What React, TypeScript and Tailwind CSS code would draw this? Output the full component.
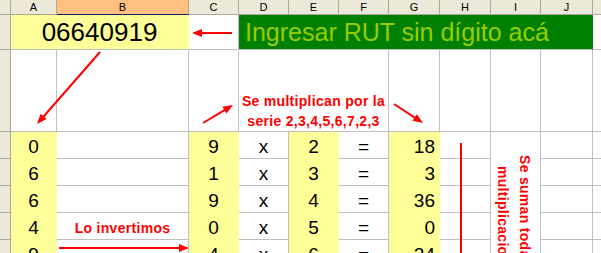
import type { FC, ReactNode } from 'react';

const gridCell = 'border-r border-b border-[#c0c0c0] bg-white';
const yellowCell = 'border-r border-b border-[#ffff99] bg-[#ffff99]';
const headCell = 'border-r border-b border-[#aca899] bg-[#ece9d8]';
const numText = 'flex items-end text-[19px] leading-none pb-[2px] text-black';

const rows = [
  ['0', '', '9', '2', '18'],
  ['6', '', '1', '3', '3'],
  ['6', '', '9', '4', '36'],
  ['4', 'Lo invertimos', '0', '5', '0'],
  ['9', '', '4', '6', '24'],
];

const letters = ['A', 'B', 'C', 'D', 'E', 'F', 'G', 'H', 'I', 'J', 'K'];

const Arrow: FC<{ x1: number; y1: number; x2: number; y2: number }> = ({ x1, y1, x2, y2 }) => {
  const dx = x2 - x1;
  const dy = y2 - y1;
  const len = Math.hypot(dx, dy);
  const ux = dx / len;
  const uy = dy / len;
  const hl = 10;
  const hw = 4;
  const bx = x2 - ux * hl;
  const by = y2 - uy * hl;
  const points = `${x2},${y2} ${bx - uy * hw},${by + ux * hw} ${bx + uy * hw},${by - ux * hw}`;
  return (
    <g>
      <line x1={x1} y1={y1} x2={bx + ux} y2={by + uy} stroke="#ff0000" strokeWidth={2} />
      <polygon points={points} fill="#ff0000" />
    </g>
  );
};

const Head: FC<{ label: string; selected?: boolean }> = ({ label, selected }) => (
  <div
    className={
      selected
        ? 'border-r border-b border-r-[#aca899] border-b-[#0a246a] bg-[#ffc080] flex items-center justify-center text-[11px] leading-none'
        : headCell + ' flex items-center justify-center text-[11px] leading-none'
    }
  >
    {label}
  </div>
);

const RedLabel: FC<{ children: ReactNode }> = ({ children }) => (
  <span className="text-[14px] font-bold leading-[20px] text-[#ff0000] tracking-[0.3px]">{children}</span>
);

export default function App() {
  return (
    <div className="relative w-[601px] h-[253px] overflow-hidden bg-white font-['Liberation_Sans',Arial,sans-serif]">
      <div className="grid grid-cols-[11px_46px_132px_50px_50px_50px_50px_51px_51px_50px_52px_60px] grid-rows-[15px_35px_82px_27px_27px_27px_27px_27px]">
        {/* column headers */}
        <div className={headCell} />
        {letters.map((l) => (
          <Head key={l} label={l === 'K' ? '' : l} selected={l === 'B'} />
        ))}

        {/* row 1 */}
        <div className={headCell} />
        <div className="col-span-2 border-r border-b border-r-[#ffff99] border-b-[#c0c0c0] bg-[#ffff99] flex items-center justify-center text-[26px] leading-none text-black">
          06640919
        </div>
        <div className={gridCell} />
        <div className="col-span-7 border-r border-b border-r-[#008000] border-b-[#c0c0c0] bg-[#008000] flex items-center pl-[6px] text-[25px] leading-none text-[#99cc00]">
          Ingresar RUT sin dígito acá
        </div>
        <div className={gridCell} />

        {/* row 2 */}
        <div className={headCell} />
        <div className={gridCell} />
        <div className={gridCell} />
        <div className={gridCell} />
        <div className={gridCell + ' col-span-3 flex flex-col items-center justify-end text-center'}>
          <RedLabel>Se multiplican por la</RedLabel>
          <RedLabel>serie 2,3,4,5,6,7,2,3</RedLabel>
        </div>
        <div className={gridCell} />
        <div className={gridCell} />
        <div className={gridCell} />
        <div className={gridCell} />
        <div className={gridCell} />

        {/* data rows */}
        {rows.map((r, i) => (
          <div key={i} className="contents">
            <div className={headCell} />
            <div className={yellowCell + ' justify-center ' + numText}>{r[0]}</div>
            <div className={gridCell + ' flex items-end justify-center pb-[1px]'}>
              {r[1] && <RedLabel>{r[1]}</RedLabel>}
            </div>
            <div className={yellowCell + ' justify-center ' + numText}>{r[2]}</div>
            <div className={gridCell + ' justify-center ' + numText}>x</div>
            <div className={yellowCell + ' justify-center ' + numText}>{r[3]}</div>
            <div className={gridCell + ' justify-center ' + numText}>=</div>
            <div className={yellowCell + ' justify-end pr-[4px] ' + numText}>{r[4]}</div>
            <div className={gridCell} />
            <div className="border-r border-[#c0c0c0] bg-white" />
            <div className={gridCell} />
            <div className={gridCell} />
          </div>
        ))}
      </div>

      {/* vertical note over column I */}
      <div className="absolute left-[492px] top-[131px] w-[44px] h-[184px] [writing-mode:vertical-rl] text-center text-[14px] font-bold leading-[22px] text-[#ff0000] tracking-[0.3px]">
        Se suman todas las
        <br />
        multiplicaciones
      </div>

      {/* arrows */}
      <svg className="absolute inset-0 pointer-events-none" width={601} height={253}>
        <Arrow x1={232} y1={33} x2={192} y2={33} />
        <Arrow x1={100} y1={52} x2={37} y2={124} />
        <Arrow x1={203} y1={123} x2={233} y2={105} />
        <Arrow x1={394} y1={104} x2={423} y2={123} />
        <Arrow x1={59} y1={248} x2={189} y2={248} />
        <line x1={461} y1={143} x2={461} y2={260} stroke="#ff0000" strokeWidth={2} />
      </svg>
    </div>
  );
}
